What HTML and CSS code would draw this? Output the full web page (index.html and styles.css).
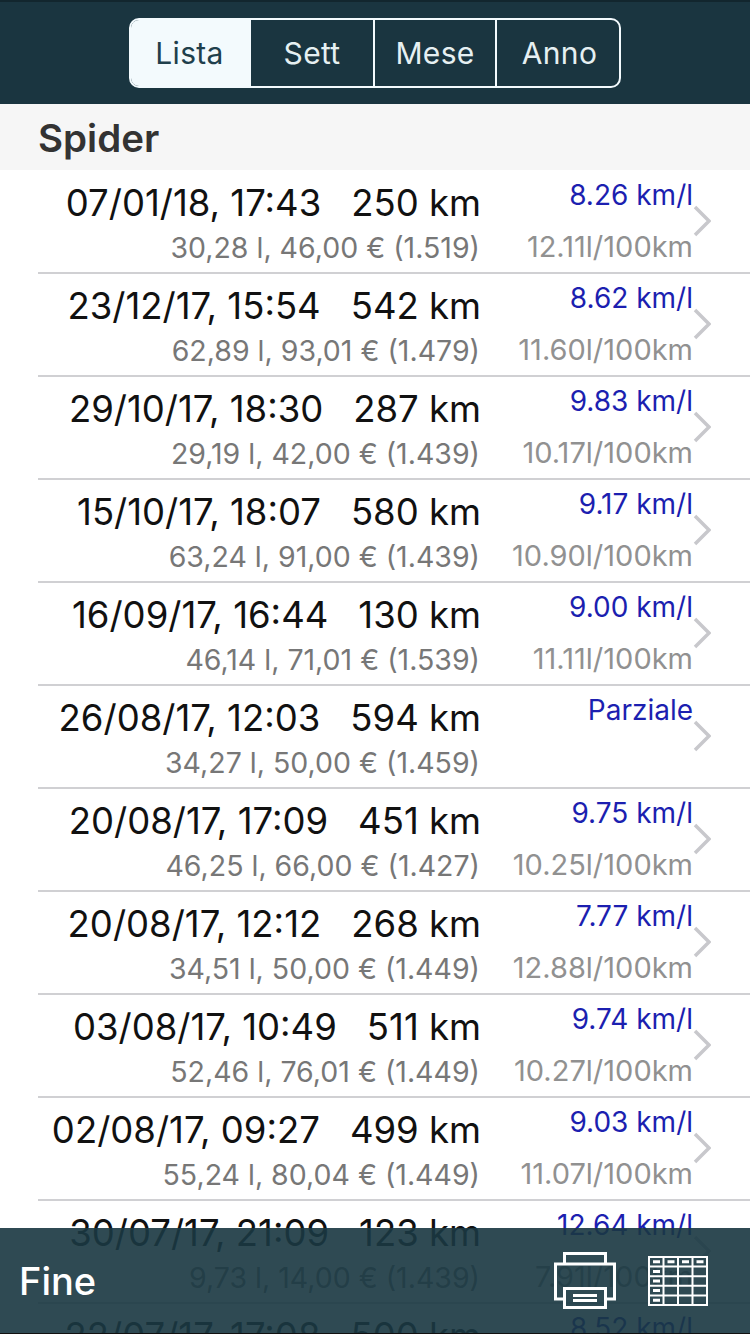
FILE: index.html
```html
<!DOCTYPE html>
<html lang="it">
<head>
<meta charset="utf-8">
<title>Spider</title>
<link rel="stylesheet" href="styles.css">
</head>
<body>
<div class="screen">
  <header class="topbar">
    <nav class="seg">
      <span class="seg-item active">Lista</span>
      <span class="seg-item second">Sett</span>
      <span class="seg-item">Mese</span>
      <span class="seg-item last">Anno</span>
    </nav>
  </header>
  <h1 class="section">Spider</h1>
  <main class="list">
    <div class="row"><div class="left"><div class="main"><span>07/01/18, 17:43</span><span>250 km</span></div><div class="sub">30,28 l, 46,00 € (1.519)</div></div><div class="right"><div class="eff">8.26 km/l</div><div class="cons">12.11l/100km</div></div><svg class="chev" viewBox="0 0 18 32"><path d="M2 2l14 14L2 30"/></svg></div>
    <div class="row"><div class="left"><div class="main"><span>23/12/17, 15:54</span><span>542 km</span></div><div class="sub">62,89 l, 93,01 € (1.479)</div></div><div class="right"><div class="eff">8.62 km/l</div><div class="cons">11.60l/100km</div></div><svg class="chev" viewBox="0 0 18 32"><path d="M2 2l14 14L2 30"/></svg></div>
    <div class="row"><div class="left"><div class="main"><span>29/10/17, 18:30</span><span>287 km</span></div><div class="sub">29,19 l, 42,00 € (1.439)</div></div><div class="right"><div class="eff">9.83 km/l</div><div class="cons">10.17l/100km</div></div><svg class="chev" viewBox="0 0 18 32"><path d="M2 2l14 14L2 30"/></svg></div>
    <div class="row"><div class="left"><div class="main"><span>15/10/17, 18:07</span><span>580 km</span></div><div class="sub">63,24 l, 91,00 € (1.439)</div></div><div class="right"><div class="eff">9.17 km/l</div><div class="cons">10.90l/100km</div></div><svg class="chev" viewBox="0 0 18 32"><path d="M2 2l14 14L2 30"/></svg></div>
    <div class="row"><div class="left"><div class="main"><span>16/09/17, 16:44</span><span>130 km</span></div><div class="sub">46,14 l, 71,01 € (1.539)</div></div><div class="right"><div class="eff">9.00 km/l</div><div class="cons">11.11l/100km</div></div><svg class="chev" viewBox="0 0 18 32"><path d="M2 2l14 14L2 30"/></svg></div>
    <div class="row"><div class="left"><div class="main"><span>26/08/17, 12:03</span><span>594 km</span></div><div class="sub">34,27 l, 50,00 € (1.459)</div></div><div class="right"><div class="eff">Parziale</div><div class="cons"></div></div><svg class="chev" viewBox="0 0 18 32"><path d="M2 2l14 14L2 30"/></svg></div>
    <div class="row"><div class="left"><div class="main"><span>20/08/17, 17:09</span><span>451 km</span></div><div class="sub">46,25 l, 66,00 € (1.427)</div></div><div class="right"><div class="eff">9.75 km/l</div><div class="cons">10.25l/100km</div></div><svg class="chev" viewBox="0 0 18 32"><path d="M2 2l14 14L2 30"/></svg></div>
    <div class="row"><div class="left"><div class="main"><span>20/08/17, 12:12</span><span>268 km</span></div><div class="sub">34,51 l, 50,00 € (1.449)</div></div><div class="right"><div class="eff">7.77 km/l</div><div class="cons">12.88l/100km</div></div><svg class="chev" viewBox="0 0 18 32"><path d="M2 2l14 14L2 30"/></svg></div>
    <div class="row"><div class="left"><div class="main"><span>03/08/17, 10:49</span><span>511 km</span></div><div class="sub">52,46 l, 76,01 € (1.449)</div></div><div class="right"><div class="eff">9.74 km/l</div><div class="cons">10.27l/100km</div></div><svg class="chev" viewBox="0 0 18 32"><path d="M2 2l14 14L2 30"/></svg></div>
    <div class="row"><div class="left"><div class="main"><span>02/08/17, 09:27</span><span>499 km</span></div><div class="sub">55,24 l, 80,04 € (1.449)</div></div><div class="right"><div class="eff">9.03 km/l</div><div class="cons">11.07l/100km</div></div><svg class="chev" viewBox="0 0 18 32"><path d="M2 2l14 14L2 30"/></svg></div>
    <div class="row"><div class="left"><div class="main"><span>30/07/17, 21:09</span><span>123 km</span></div><div class="sub">9,73 l, 14,00 € (1.439)</div></div><div class="right"><div class="eff">12.64 km/l</div><div class="cons">7.91l/100km</div></div><svg class="chev" viewBox="0 0 18 32"><path d="M2 2l14 14L2 30"/></svg></div>
    <div class="row"><div class="left"><div class="main"><span>22/07/17, 17:08</span><span>500 km</span></div><div class="sub">42,60 l, 63,00 € (1.479)</div></div><div class="right"><div class="eff">8.52 km/l</div><div class="cons">11.74l/100km</div></div><svg class="chev" viewBox="0 0 18 32"><path d="M2 2l14 14L2 30"/></svg></div>
  </main>
  <footer class="toolbar">
    <span class="done">Fine</span>
    <svg class="ico-print" viewBox="0 0 62 57"><path d="M10.5 12V1.5h41V12M10.500 47H1.500V12h59v35h-9"/><path d="M10.5 36.5h41v19h-41z"/><path d="M19 43.5h24M19 48.5h24"/></svg>
    <svg class="ico-table" viewBox="0 0 60 50"><path d="M1 1h58v48H1zM1 10.600h58M1 20.200h58M1 29.800h58M1 39.400h58M15.500 1v48M30 1v48M44.500 1v48"/><path class="dash" d="M5 5.800h7M19.500 5.800h7M34 5.800h7M48.500 5.800h7M5 15.400h7M5 25h7M5 34.600h7M5 44.200h7"/></svg>
  </footer>
</div>
</body>
</html>
```
FILE: styles.css
```css
* { box-sizing: border-box; }
html, body { margin: 0; padding: 0; }
body { background: #fff; font-family: "Inter", "Liberation Sans", sans-serif; }
.screen { position: relative; width: 750px; height: 1334px; overflow: hidden; display: flex; flex-direction: column; }
.topbar { height: 104px; flex: none; background: #1a3540; display: flex; justify-content: center; padding-top: 16px; border-top: 2px solid #12262e; }
.seg { display: flex; width: 492px; height: 70px; border: 2px solid #f3fafd; border-radius: 10px; overflow: hidden; }
.seg-item { flex: 0 0 122px; display: flex; align-items: center; justify-content: center; color: #e6f0f2; font-size: 30px; letter-spacing: 0.3px; padding-bottom: 1px; border-left: 2px solid #f3fafd; }
.seg-item.active { background: #f3fafd; color: #1f3f4c; flex-basis: 120px; border-left: 0; padding-right: 3px; }
.seg-item.second { border-left: 0; }
.seg-item.last { flex: 1 1 0; padding-left: 3px; }
.section { margin: 0; height: 66px; flex: none; background: #f6f6f6; color: #333; font-size: 38.500px; font-weight: 600; line-height: 68px; padding-left: 38px; }
.list { flex: none; padding-top: 1px; }
.row { position: relative; height: 103px; display: flex; margin-left: 38px; border-bottom: 2px solid #d0d0d3; }
.left { width: 442px; flex: none; text-align: right; }
.main { display: flex; justify-content: flex-end; gap: 30px; font-size: 36.500px; line-height: 44px; margin-top: 10px; margin-right: -1px; color: #111; white-space: nowrap; }
.sub { font-size: 28.500px; line-height: 36px; margin-top: 5px; color: #777; white-space: nowrap; }
.right { width: 213px; flex: none; text-align: right; white-space: nowrap; margin-right: -1px; }
.eff { font-size: 28px; line-height: 36px; margin-top: 6px; color: #1c1fb0; height: 36px; }
.cons { font-size: 29px; line-height: 36px; margin-top: 16px; color: #919191; }
.chev { width: 18px; height: 32px; flex: none; margin: 34px 0 0 1px; fill: none; stroke: #c8c8cc; stroke-width: 3.500; }
.toolbar { position: absolute; left: 0; right: 0; bottom: 0; height: 106px; background: rgba(26, 56, 66, 0.91); border-bottom: 1px solid #111; display: flex; align-items: center; padding: 0 42px 0 19px; color: #fff; }
.done { font-size: 38px; font-weight: 500; margin-right: auto; }
.ico-print { width: 62px; height: 57px; margin-right: 32px; fill: none; stroke: #fff; stroke-width: 3; }
.ico-table { width: 60px; height: 50px; fill: none; stroke: #fff; stroke-width: 2; }
.ico-table .dash { stroke-width: 3; }
```
